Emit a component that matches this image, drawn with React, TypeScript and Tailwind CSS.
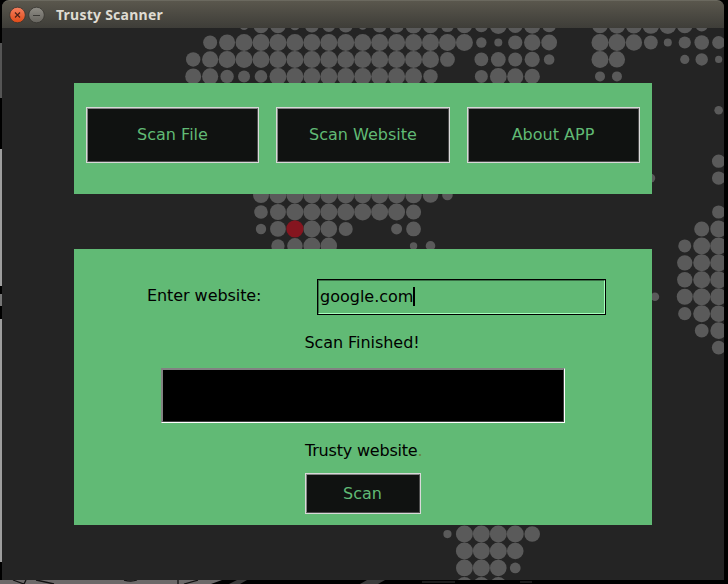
import React from "react";

type Dot = [col: number, radius: number];

const STEP = 16.95;

function run(from: number, to: number, radius = 8.5): Dot[] {
  return Array.from({ length: to - from + 1 }, (_, i) => [from + i, radius] as Dot);
}

const rows: Record<string, Dot[]> = {
  "-1": [
    [3, 4.5], [4, 7.6], [5, 7.8], [6, 4.8], [7, 7], [8, 6.4], [9, 7], [10, 4.3], [11, 7],
    [12, 7.2], [13, 8], [14, 7.8], [15, 6.5], [16, 7.8], [17, 6.6], [18, 8.4], [19, 7.4], [20, 8.2], [21, 6.8],
    [24, 7.8], [25, 8.2], [26, 8], [27, 8.3], [28, 8.4], [29, 7.8], [30, 6],
  ],
  "0": [
    [1, 7], [2, 8], ...run(3, 16), [17, 5.2], [18, 4], [19, 7.1], [20, 8.2], [21, 7.9],
    [24, 8.5], [25, 8.5], [26, 8.2], [27, 6.9], [28, 4], [29, 6.1], [30, 7.3], [31, 6.5],
  ],
  "1": [
    [0, 7.2], [1, 8.1], ...run(2, 14), [15, 7.4], [17, 6.9], [18, 7.4], [19, 7], [20, 7.6], [21, 5.3],
    [24, 8.5], [25, 8.1], [29, 4.6], [30, 6.2], [31, 3.6],
  ],
  "2": [
    [0, 8], [1, 8.1], [2, 6.7], [3, 6], [4, 6.3], ...run(5, 13), [14, 7.2],
    [17, 6.5], [18, 8.4], [19, 8.1], [20, 7.7], [24, 5], [25, 5],
  ],
  "4": [[31, 4.3]],
  "7": [[31, 6.7]],
  "8": [[27, 4.4], [31, 6.7]],
  "9": [[4, 8], ...run(5, 12), [13, 8.3], [14, 7.8], [15, 5.3]],
  "10": [[4, 6.8], [5, 8], ...run(6, 12), [13, 7.6], [31, 6.6]],
  "11": [[4, 5.2], [5, 7.9], [7, 8.5], [8, 8.3], [9, 7], [12, 5.5], [13, 7.4], [30, 7.5], [31, 8.4]],
  "12": [[5, 6.7], [6, 7.8], [7, 8.5], [8, 8.3], [13, 3.7], [14, 4.8], [29, 6.5], [30, 8.5], [31, 8.5]],
  "13": [[29, 7.7], [30, 8.5], [31, 8.5]],
  "14": [[29, 7.7], [30, 8.5], [31, 8.5]],
  "15": [[27.24, 4.3], [29, 8], [30, 8.6], [31, 8.5]],
  "16": [[29, 6.6], [30, 8.5], [31, 8.3]],
  "17": [[30, 6.9], [31, 8.3]],
  "18": [[31, 6.8]],
  "29": [[15, 4.1], ...run(16, 19), [20, 7.8]],
  "30": [...run(16, 18), [19, 8.3]],
  "31": [[16, 8.4], [17, 8.5], [18, 8.3], [19, 5.4]],
  "32": [...run(16, 18, 8)],
};

function WorldMap() {
  return (
    <svg className="absolute inset-0 h-full w-full" viewBox="2 28 722 552">
      {Object.entries(rows).map(([row, dots]) =>
        dots.map(([col, r]) => (
          <circle key={`${row}-${col}`} cx={193.2 + col * STEP} cy={42.5 + Number(row) * STEP} r={r} fill="#5a5a5a" />
        ))
      )}
      <circle cx={294.9} cy={228.9} r={8.6} fill="#85151f" />
    </svg>
  );
}

function TkButton({ label, className }: { label: string; className: string }) {
  return (
    <button className={`border border-[#d9d9d9] bg-[#101211] text-[#61ba75] ${className}`}>
      <span className="flex h-full w-full items-center justify-center border border-t-[#858585] border-r-[#4d4d4d] border-b-[#4d4d4d] border-l-[#858585]">
        {label}
      </span>
    </button>
  );
}

function TitleBar() {
  return (
    <header className="flex h-7 items-center rounded-t-[7px] border-t border-[#6b695f] bg-linear-to-b from-[#5a574d] to-[#3e3d38] pl-[7px]">
      <svg width="40" height="20" viewBox="0 0 40 20" className="shrink-0">
        <defs>
          <linearGradient id="close" x2="0" y2="1">
            <stop stopColor="#f58060" />
            <stop offset="1" stopColor="#df4a16" />
          </linearGradient>
          <linearGradient id="min" x2="0" y2="1">
            <stop stopColor="#8f8d86" />
            <stop offset="1" stopColor="#66645e" />
          </linearGradient>
        </defs>
        <circle cx="8.5" cy="10" r="7.8" fill="url(#close)" stroke="#35342f" strokeWidth="0.8" />
        <path d="M6 7.5l5 5M11 7.5l-5 5" stroke="#4a2117" strokeWidth="1.2" />
        <circle cx="27.5" cy="10" r="7.8" fill="url(#min)" stroke="#35342f" strokeWidth="0.8" />
        <path d="M24 10.5h7" stroke="#3b3a36" strokeWidth="1" />
      </svg>
      <h1 className="ml-[7px] mt-px whitespace-nowrap font-['Noto_Sans',sans-serif] text-[14px] font-bold leading-none tracking-[0.24px] text-[#dfdbd2]">
        Trusty Scanner
      </h1>
    </header>
  );
}

export default function App() {
  return (
    <div className="relative h-[584px] w-[728px] overflow-hidden bg-black pr-1 pb-1 pl-0.5 font-['DejaVu_Sans',sans-serif] text-[16px] leading-[19px] text-black">
      <svg className="absolute inset-0" width="728" height="584">
        <path d="M0 43h2v55h-2z" fill="#555" />
        <path d="M0 149h2v137h-2zM0 319h2v243h-2z" fill="#9e9e9e" />
        <path d="M0 294h2v12h-2z" fill="#777" />
        <path d="M0 580H222L211 584H0z" fill="#6c6969" />
        <path d="M13 580L24 584M26 580L24 584M36 580L54 584M124 580Q131 582 137 580M178 580V584M184 584L198 580" fill="none" stroke="#111" strokeWidth="1.3" />
        <path d="M229 584L237 580H247L240 584zM360 584L367 580H385L378 584z" fill="#3c3c3c" />
        <path d="M422 582h33M520 582h12" stroke="#1d1d1d" strokeWidth="2" />
      </svg>

      <div className="relative flex h-[580px] flex-col">
        <TitleBar />
        <main className="relative flex flex-1 flex-col items-center overflow-hidden bg-[#242424] pt-[55px]">
          <WorldMap />

          <nav className="relative flex h-[111px] w-[578px] shrink-0 gap-[17px] bg-[#61ba75] px-3 pt-6">
            <TkButton label="Scan File" className="h-14 w-[173px] leading-[21px] *:pb-[2px]" />
            <TkButton label="Scan Website" className="h-14 w-[174px] leading-[21px] *:pb-[2px]" />
            <TkButton label="About APP" className="h-14 w-[173px] leading-[21px] *:pr-px *:pb-[2px]" />
          </nav>

          <section className="relative mt-[55px] flex h-[276px] w-[578px] shrink-0 flex-col items-center bg-[#61ba75] pt-[30px]">
            <div className="flex w-full pl-[73px]">
              <label className="w-[170px] pt-[7px] tracking-[-0.07px]">Enter website:</label>
              <div className="h-9 w-[289px] border border-black">
                <div className="flex h-full items-center border border-t-[#3a7046] border-r-[#a6ffbd] border-b-[#a6ffbd] border-l-[#3a7046] pb-0.5 pl-px">
                  google.com
                  <span className="h-[19px] w-0.5 bg-black" />
                </div>
              </div>
            </div>
            <p className="mt-[18px] -translate-x-px tracking-[-0.05px]">Scan Finished!</p>
            <div className="mt-[16px] h-[55px] w-[404px] border border-t-[#828282] border-r-white border-b-white border-l-[#828282] bg-black">
              <div className="h-full border border-t-[#828282] border-r-[#404040] border-b-[#404040] border-l-[#828282]" />
            </div>
            <p className="mt-[18px] w-[116px] whitespace-nowrap tracking-[-0.2px]">
              Trusty website<span className="text-[#67853a]">.</span>
            </p>
            <TkButton label="Scan" className="mt-[13px] h-[41px] w-[116px] *:pr-px" />
          </section>
        </main>
      </div>
    </div>
  );
}
